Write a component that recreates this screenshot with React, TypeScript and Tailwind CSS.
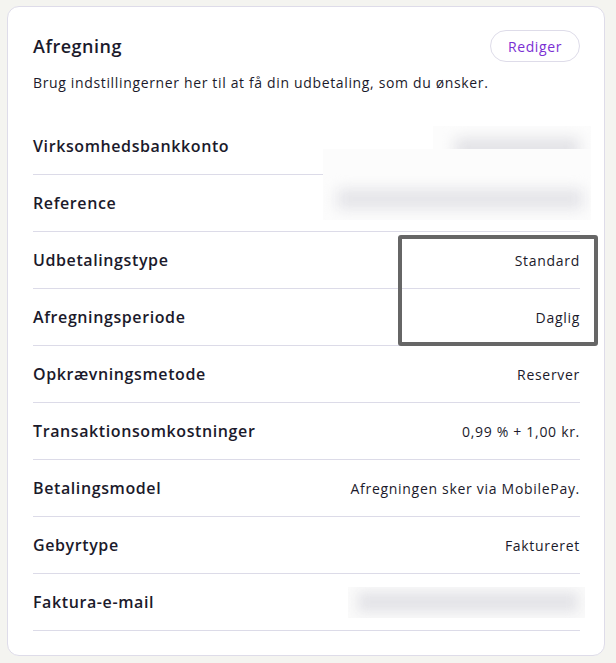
import React from 'react';

const rows: { label: string; value?: string }[] = [
  { label: 'Virksomhedsbankkonto' },
  { label: 'Reference' },
  { label: 'Udbetalingstype', value: 'Standard' },
  { label: 'Afregningsperiode', value: 'Daglig' },
  { label: 'Opkrævningsmetode', value: 'Reserver' },
  { label: 'Transaktionsomkostninger', value: '0,99 % + 1,00 kr.' },
  { label: 'Betalingsmodel', value: 'Afregningen sker via MobilePay.' },
  { label: 'Gebyrtype', value: 'Faktureret' },
  { label: 'Faktura-e-mail' },
];

export default function App() {
  return (
    <div className="w-[616px] h-[663px] bg-[#f4f4f0] pt-[6px] px-[7px] font-['Open_Sans',sans-serif] text-[#1b1a2b]">
      <div className="relative bg-white border border-[#dedce9] rounded-[12px] w-[598px] h-[650px] pl-[25px] pr-[24px] pt-[23px]">
        {/* Header */}
        <div className="flex items-center justify-between h-[32px]">
          <h2 className="text-[18px] font-semibold tracking-[0.5px]">Afregning</h2>
          <button className="h-[32px] px-[17px] rounded-full border border-[#dedce9] text-[#7b2fd3] text-[14px] font-medium tracking-[0.6px]">
            Rediger
          </button>
        </div>
        <p className="text-[14px] mt-[10px] leading-[22px] tracking-[0.65px]">
          Brug indstillingerner her til at få din udbetaling, som du ønsker.
        </p>

        {/* Rows */}
        <div className="mt-[24px]">
          {rows.map((r, i) => (
            <div
              key={i}
              className="flex items-center justify-between h-[57px] border-b border-[#dcdbe8]"
            >
              <span className="text-[16px] font-semibold tracking-[0.6px]">{r.label}</span>
              {r.value && <span className="text-[14px] tracking-[0.7px]">{r.value}</span>}
            </div>
          ))}
        </div>

        {/* Redacted values */}
        <div className="absolute left-[425px] top-[119px] w-[158px] h-[48px] bg-[#fcfcfc] overflow-hidden">
          <div className="absolute left-[22px] top-[12px] w-[124px] h-[22px] bg-[#e2e2e6] blur-[7px]" />
        </div>
        <div className="absolute left-[315px] top-[142px] w-[268px] h-[71px] bg-[#fcfcfc] overflow-hidden">
          <div className="absolute left-[14px] top-[40px] w-[246px] h-[20px] bg-[#e4e4e8] blur-[7px]" />
        </div>
        <div className="absolute left-[340px] top-[580px] w-[237px] h-[31px] bg-[#fafafa] overflow-hidden">
          <div className="absolute left-[10px] top-[5px] w-[220px] h-[20px] bg-[#e4e4e8] blur-[6px]" />
        </div>

        {/* Annotation frame */}
        <div className="absolute left-[390px] top-[228px] w-[200px] h-[111px] border-4 border-[#666666] rounded-[3px]" />
      </div>
    </div>
  );
}
